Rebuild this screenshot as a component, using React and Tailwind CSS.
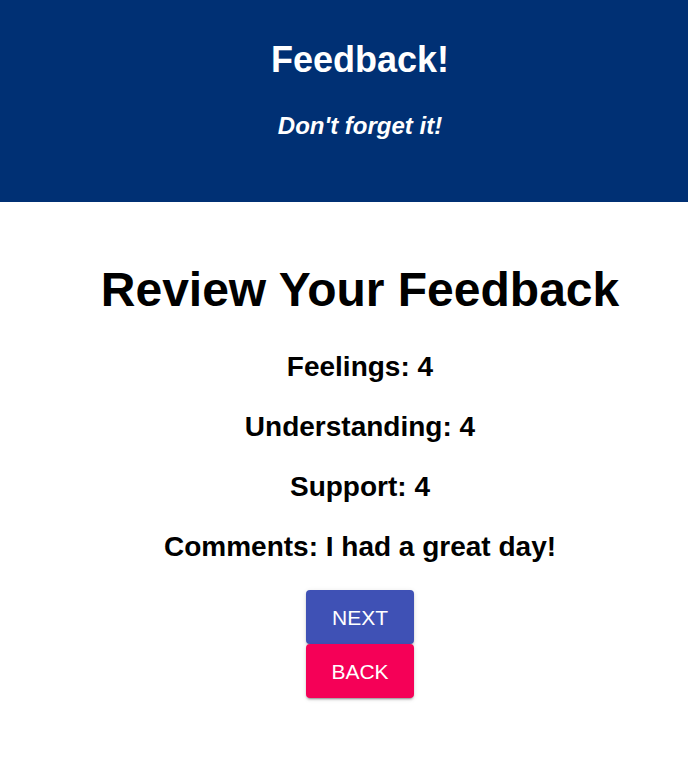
import React from 'react';

const items = [
  { label: 'Feelings', value: '4' },
  { label: 'Understanding', value: '4' },
  { label: 'Support', value: '4' },
  { label: 'Comments', value: 'I had a great day!' },
];

export default function App() {
  return (
    <div className="min-h-[774px] bg-white text-black font-['Liberation_Sans',Arial,sans-serif]">
      {/* Header */}
      <header className="h-[202px] bg-[#003074] text-white pl-8 flex flex-col items-center">
        <h1 className="mt-[39px] text-[36px] leading-[42px] font-bold">Feedback!</h1>
        <h2 className="mt-[31px] text-[24px] leading-[28px] font-bold italic">Don't forget it!</h2>
      </header>

      {/* Review */}
      <main className="pl-8 flex flex-col items-center">
        <h1 className="mt-[60px] text-[48px] leading-[56px] font-bold">Review Your Feedback</h1>
        <div className="mt-[19px] flex flex-col items-center">
          {items.map(item => (
            <h3 key={item.label} className="h-[60px] flex items-center text-[28px] leading-[32px] font-bold">
              {item.label}: {item.value}
            </h3>
          ))}
        </div>
        <div className="mt-[13px] flex flex-col items-center">
          <button className="w-[108px] h-[54px] pt-[2px] rounded bg-[#3f51b5] text-white text-[21px] shadow-[0_3px_1px_-2px_rgba(0,0,0,0.2),0_2px_2px_0_rgba(0,0,0,0.14),0_1px_5px_0_rgba(0,0,0,0.12)]">
            NEXT
          </button>
          <button className="w-[108px] h-[54px] pt-[2px] rounded bg-[#f50057] text-white text-[21px] shadow-[0_3px_1px_-2px_rgba(0,0,0,0.2),0_2px_2px_0_rgba(0,0,0,0.14),0_1px_5px_0_rgba(0,0,0,0.12)]">
            BACK
          </button>
        </div>
      </main>
    </div>
  );
}
